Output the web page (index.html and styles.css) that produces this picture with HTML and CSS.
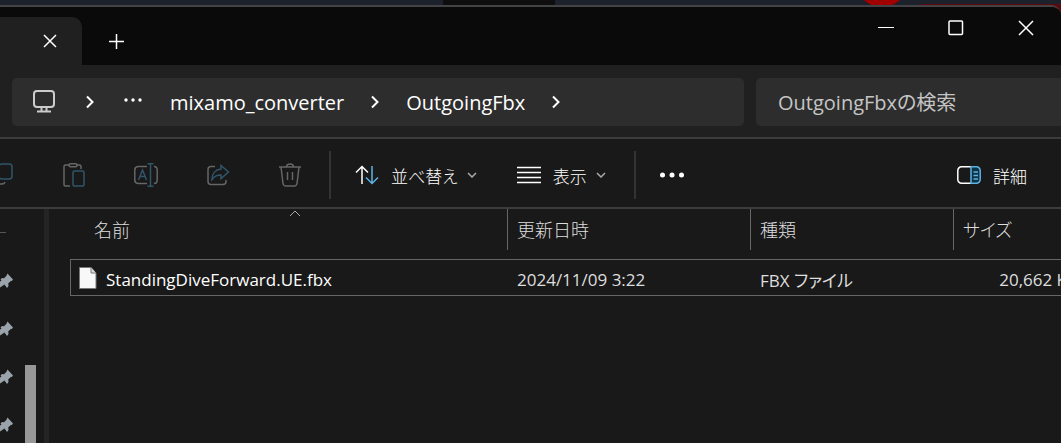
FILE: index.html
```html
<!DOCTYPE html>
<html lang="ja">
<head>
    <meta charset="UTF-8">
    <meta name="viewport" content="width=device-width, initial-scale=1.0">
    <title>OutgoingFbx</title>
    <link rel="stylesheet" href="styles.css">
</head>
<body>

<div class="desktop">
    <div class="desktop-window"></div>
    <div class="desktop-red-dot"></div>
    <div class="desktop-red-area"></div>
</div>

<div class="window">
    <header class="titlebar">
        <div class="tab">
            <button class="icon-btn" aria-label="タブを閉じる">
                <svg width="14" height="14" viewBox="0 0 14 14"><path d="M1 1l12 12M13 1L1 13"/></svg>
            </button>
        </div>
        <button class="icon-btn new-tab" aria-label="新しいタブ">
            <svg width="16" height="16" viewBox="0 0 16 16"><path d="M8.500 1v15M1 8.500h15"/></svg>
        </button>
        <div class="window-controls">
            <button class="control-btn" aria-label="最小化">
                <svg width="16" height="16" viewBox="0 0 16 16"><path d="M0 7.500h16" stroke-width="1"/></svg>
            </button>
            <button class="control-btn" aria-label="最大化">
                <svg width="16" height="16" viewBox="0 0 16 16"><rect x="1" y="1" width="13.500" height="13.500" rx="1"/></svg>
            </button>
            <button class="control-btn" aria-label="閉じる">
                <svg width="16" height="16" viewBox="0 0 16 16"><path d="M1 1l14 14M15 1L1 15"/></svg>
            </button>
        </div>
    </header>

    <div class="address-row">
        <nav class="breadcrumb" aria-label="アドレス">
            <button class="icon-btn crumb-pc" aria-label="PC">
                <svg width="24" height="24" viewBox="0 0 24 24"><rect x="2" y="1" width="20" height="16" rx="3"/><path d="M9.500 17v4M14.500 17v4M5 21.500h14"/></svg>
            </button>
            <svg class="crumb-arrow" width="8" height="14" viewBox="0 0 8 14"><path d="M1 1.500L6.500 7 1 12.500"/></svg>
            <button class="icon-btn crumb-more" aria-label="その他の場所">
                <svg width="18" height="8" viewBox="0 0 18 8"><g class="dots"><circle cx="2" cy="2" r="1.700"/><circle cx="9" cy="2" r="1.700"/><circle cx="16" cy="2" r="1.700"/></g></svg>
            </button>
            <a href="#" class="crumb">mixamo_converter</a>
            <svg class="crumb-arrow" width="8" height="14" viewBox="0 0 8 14"><path d="M1 1.500L6.500 7 1 12.500"/></svg>
            <a href="#" class="crumb">OutgoingFbx</a>
            <svg class="crumb-arrow" width="8" height="14" viewBox="0 0 8 14"><path d="M1 1.500L6.500 7 1 12.500"/></svg>
        </nav>
        <input type="text" class="search" placeholder="OutgoingFbxの検索" aria-label="検索">
    </div>

    <div class="toolbar">
        <button class="tool-btn" disabled aria-label="コピー">
            <svg width="24" height="24" viewBox="0 0 24 24"><path class="gray" d="M6 5.500C4.500 6 4 7 4 8.500V16c0 3 2 5 5 5h3c1.500 0 2.500-.6 3-2"/><rect class="blue" x="9" y="1" width="13" height="15" rx="3"/></svg>
        </button>
        <button class="tool-btn" disabled aria-label="貼り付け">
            <svg width="24" height="24" viewBox="0 0 24 24"><path class="gray" d="M7 2H3.500A1.500 1.500 0 0 0 2 3.500v18A1.500 1.500 0 0 0 3.500 23H8M14 2h3.500A1.500 1.500 0 0 1 19 3.500V6"/><rect class="gray" x="7" y=".8" width="8" height="3" rx="1.500"/><rect class="blue" x="11" y="8" width="11" height="15" rx="1.500"/></svg>
        </button>
        <button class="tool-btn" disabled aria-label="名前の変更">
            <svg width="24" height="24" viewBox="0 0 24 24"><path class="gray" d="M13 3.500H4a3.500 3.500 0 0 0-3.200 3.500v10A3.500 3.500 0 0 0 4 20.500h9M20 3.500c2 0 3.200 1.500 3.200 3.500v10c0 2-1.200 3.500-3.200 3.500"/><path class="blue" d="M4.500 17L8.500 7l4 10M6 13.500h5M16.500 1v22M13.500.8h6M13.500 23.200h6"/></svg>
        </button>
        <button class="tool-btn" disabled aria-label="共有">
            <svg width="24" height="24" viewBox="0 0 24 24"><path class="gray" d="M9 3.500H5A3 3 0 0 0 2 6.500v12a3 3 0 0 0 3 3h12a3 3 0 0 0 3-3V17"/><path class="blue" d="M15 2.500l7.500 6.500-7.500 6.500v-3.500c-4 0-7 1.500-9 4.500 0-6 3.500-10 9-10.500z"/></svg>
        </button>
        <button class="tool-btn" disabled aria-label="削除">
            <svg width="24" height="24" viewBox="0 0 24 24"><path class="gray" d="M1 4h22M8.500 4c0-4 7-4 7 0M3 4l2 16.500A3 3 0 0 0 8 23h8a3 3 0 0 0 3-2.500L21 4M9.500 9v8M14.500 9v8"/></svg>
        </button>
        <span class="separator"></span>
        <button class="text-btn">
            <svg width="24" height="20" viewBox="0 0 24 20"><path d="M7 19V1.500M1 7.500l6-6 6 6"/><path class="blue" d="M17 1v17.500M11 12.500l6 6 6-6"/></svg>
            並べ替え
            <svg class="chevron" width="10" height="6" viewBox="0 0 10 6"><path d="M1 1l4 4 4-4"/></svg>
        </button>
        <button class="text-btn">
            <svg width="24" height="18" viewBox="0 0 24 18"><path d="M0 1.500h24M0 6.500h24M0 11.500h24M0 16.500h24"/></svg>
            表示
            <svg class="chevron" width="10" height="6" viewBox="0 0 10 6"><path d="M1 1l4 4 4-4"/></svg>
        </button>
        <span class="separator"></span>
        <button class="tool-btn" aria-label="もっと見る">
            <svg width="24" height="6" viewBox="0 0 24 6"><g class="dots"><circle cx="2.500" cy="3" r="2.500"/><circle cx="12" cy="3" r="2.500"/><circle cx="21.500" cy="3" r="2.500"/></g></svg>
        </button>
        <button class="text-btn details-btn">
            <svg width="24" height="18" viewBox="0 0 24 18"><path d="M14 .8H4.500A3.700 3.700 0 0 0 .8 4.500v9a3.700 3.700 0 0 0 3.700 3.700H14"/><path class="blue pane" d="M14 .8h5.500a3.700 3.700 0 0 1 3.700 3.700v9a3.700 3.700 0 0 1-3.700 3.700H14z"/><path class="blue" d="M16.500 6h4.500M16.500 9.500h4.500M16.500 13h4.500"/></svg>
            詳細
        </button>
    </div>

    <main class="content">
        <aside class="nav-pane">
            <ul class="pinned">
                <li><svg width="14" height="16" viewBox="0 0 14 16"><path d="M7.500.5l5.500 6-1 1.300-1.500.4-2.300 2.300.3 2.500-1.500 2L4.500 11.500 0 14.500v-6l1.500-.8-1-1.200 1.500-1.500 2 .2 2.300-2.200z"/></svg></li>
                <li><svg width="14" height="16" viewBox="0 0 14 16"><path d="M7.500.5l5.500 6-1 1.300-1.500.4-2.300 2.300.3 2.500-1.500 2L4.500 11.500 0 14.500v-6l1.500-.8-1-1.200 1.500-1.500 2 .2 2.300-2.200z"/></svg></li>
                <li><svg width="14" height="16" viewBox="0 0 14 16"><path d="M7.500.5l5.500 6-1 1.300-1.500.4-2.300 2.300.3 2.500-1.500 2L4.500 11.500 0 14.500v-6l1.500-.8-1-1.200 1.500-1.500 2 .2 2.300-2.200z"/></svg></li>
                <li><svg width="14" height="16" viewBox="0 0 14 16"><path d="M7.500.5l5.500 6-1 1.300-1.500.4-2.300 2.300.3 2.500-1.500 2L4.500 11.500 0 14.500v-6l1.500-.8-1-1.200 1.500-1.500 2 .2 2.300-2.200z"/></svg></li>
            </ul>
            <div class="scroll-thumb"></div>
        </aside>

        <div class="file-list">
            <table>
                <colgroup>
                    <col class="col-name">
                    <col class="col-date">
                    <col class="col-type">
                    <col class="col-size">
                </colgroup>
                <thead>
                    <tr>
                        <th class="name"><div>名前<svg class="sort-mark" width="12" height="7" viewBox="0 0 12 7"><path d="M1 6l5-5 5 5"/></svg></div></th>
                        <th><div>更新日時</div></th>
                        <th><div>種類</div></th>
                        <th><div>サイズ</div></th>
                    </tr>
                </thead>
                <tbody>
                    <tr>
                        <td class="name">
                            <div class="file">
                                <svg width="18" height="24" viewBox="0 0 18 24"><path class="sheet" d="M.5.500h11.500l5 5.500v15.500H.5z"/><path class="fold" d="M12 .5V6h5"/></svg>
                                StandingDiveForward.UE.fbx
                            </div>
                        </td>
                        <td>2024/11/09 3:22</td>
                        <td>FBX ファイル</td>
                        <td class="size">20,662 KB</td>
                    </tr>
                </tbody>
            </table>
        </div>
    </main>
</div>

</body>
</html>
```
FILE: styles.css
```css
* {
    box-sizing: border-box;
}

body {
    font-family: "Open Sans", "Noto Sans CJK JP", sans-serif;
    font-size: 17px;
    background-color: #1c212b;
    color: #fff;
    margin: 0;
    height: 100vh;
    display: flex;
    flex-direction: column;
    overflow: hidden;
    font-feature-settings: "palt";
}

button, input {
    font: inherit;
    color: inherit;
    border: none;
    background: none;
    padding: 0;
    font-feature-settings: inherit;
}

svg {
    display: block;
    flex: none;
    fill: none;
    stroke: #fff;
    stroke-width: 1.5;
}

/* what shows above the window */
.desktop {
    position: relative;
    height: 5px;
    flex: none;
}

.desktop-window {
    position: absolute;
    left: 443px;
    top: 0;
    width: 112px;
    height: 5px;
    background-color: #0e0e0e;
}

.desktop-red-dot {
    position: absolute;
    right: 152px;
    bottom: -2px;
    width: 54px;
    height: 54px;
    border-radius: 50%;
    background-color: #a00000;
}

.desktop-red-area {
    position: absolute;
    right: 0;
    top: 4px;
    width: 140px;
    height: 12px;
    background-color: #5a0a0c;
}

.window {
    position: relative;
    flex: 1;
    display: flex;
    flex-direction: column;
    min-height: 0;
    border-top: 2px solid #434345;
    border-top-right-radius: 10px;
    background-color: #191919;
    overflow: hidden;
}

/* title bar */
.titlebar {
    display: flex;
    align-items: flex-start;
    height: 58px;
    flex: none;
    background-color: #0a0a0a;
}

.tab {
    width: 82px;
    height: 48px;
    margin-top: 10px;
    padding-left: 38px;
    display: flex;
    align-items: center;
    background-color: #202020;
    border-top-right-radius: 10px;
}

.icon-btn {
    display: flex;
    align-items: center;
    justify-content: center;
    width: 24px;
    height: 24px;
}

.new-tab {
    margin: 22px 0 0 22px;
}

.window-controls {
    display: flex;
    margin-left: auto;
}

.control-btn {
    display: flex;
    align-items: center;
    justify-content: center;
    width: 70px;
    height: 42px;
}

/* address bar and search */
.address-row {
    display: flex;
    gap: 12px;
    padding: 13px 0 11px 12px;
    background-color: #202020;
    border-bottom: 2px solid #3c3c3c;
}

.breadcrumb {
    flex: 1;
    display: flex;
    align-items: center;
    height: 48px;
    padding-left: 20px;
    background-color: #2d2d2d;
    border-radius: 5px;
}

.crumb-pc svg {
    stroke: #ccc;
    stroke-width: 2;
}

.crumb-arrow {
    margin: 0 30px;
    stroke-width: 2;
}

.crumb + .crumb-arrow {
    margin: 0 27px;
}

.crumb-more {
    width: 18px;
    margin-right: 28px;
}

.crumb {
    font-size: 20px;
    color: #fff;
    text-decoration: none;
}

.dots {
    fill: #fff;
    stroke: none;
}

.search {
    width: 305px;
    height: 48px;
    padding-left: 22px;
    background-color: #2d2d2d;
    border-radius: 5px 0 0 5px;
    font-size: 20px;
}

.search::placeholder {
    color: #c5c5c5;
}

/* toolbar */
.toolbar {
    display: flex;
    align-items: center;
    height: 70px;
    flex: none;
    margin-left: -34px;
    padding-top: 4px;
    border-bottom: 2px solid #3c3c3c;
}

.tool-btn {
    display: flex;
    align-items: center;
    justify-content: center;
    width: 72px;
    height: 48px;
}

.gray {
    stroke: #666;
}

.blue {
    stroke: #5fb2e6;
}

.tool-btn:disabled .blue {
    stroke: #30566a;
}

.separator {
    width: 2px;
    height: 48px;
    margin-left: 3px;
    background-color: #333;
}

.text-btn + .separator {
    margin-left: 12px;
}

.text-btn {
    display: flex;
    align-items: center;
    gap: 12px;
    height: 48px;
    padding: 0 16px;
    margin-left: 8px;
    font-size: 17px;
    font-weight: 300;
}

.chevron {
    margin-left: -3px;
    stroke: #aaa;
}

.details-btn {
    margin-left: auto;
    margin-right: 18px;
}

.pane {
    fill: #0c3346;
}

/* navigation pane */
.content {
    flex: 1;
    display: flex;
    min-height: 0;
}

.nav-pane {
    display: flex;
    width: 49px;
    flex: none;
    border-right: 5px solid #242424;
}

.pinned {
    list-style: none;
    width: 25px;
    margin: 23px 0 0;
    padding: 0;
}

.pinned::before {
    content: "";
    display: block;
    width: 6px;
    height: 24px;
    border-top: 1px solid #555;
}

.pinned li {
    height: 48px;
    display: flex;
    align-items: center;
}

.pinned svg {
    fill: #9aa3ab;
    stroke: none;
}

.scroll-thumb {
    width: 11px;
    margin-top: 156px;
    background-color: #989898;
}

/* file list */
.file-list {
    flex: 1;
    min-width: 0;
    padding-left: 21px;
    overflow: hidden;
}

table {
    width: 1020px;
    table-layout: fixed;
    border-spacing: 0;
}

.col-name {
    width: 438px;
}

.col-date {
    width: 243px;
}

.col-type {
    width: 203px;
}

.col-size {
    width: 136px;
}

th, td {
    padding: 0;
    text-align: left;
    font-weight: 400;
    color: #dedede;
}

th {
    height: 50px;
    vertical-align: top;
    font-size: 18px;
    font-weight: 300;
}

th div {
    position: relative;
    height: 41px;
    padding-left: 9px;
    line-height: 42px;
    border-right: 1px solid #666;
}

th.name div {
    padding-left: 24px;
}

.sort-mark {
    position: absolute;
    left: 50%;
    top: 1px;
    stroke: #aaa;
    stroke-width: 1;
}

td {
    height: 37px;
    padding: 3px 0 0 9px;
    border: 1px solid #666;
    border-width: 1px 0;
}

td.name {
    padding-left: 8px;
    border-left-width: 1px;
    color: #fff;
}

td.size {
    text-align: right;
    padding-right: 12px;
}

.file {
    display: flex;
    align-items: center;
    gap: 9px;
}

.sheet {
    fill: #f8f8f8;
    stroke: #777;
    stroke-width: 1;
}

.fold {
    fill: #ddd;
    stroke: #777;
    stroke-width: 1;
}
```
